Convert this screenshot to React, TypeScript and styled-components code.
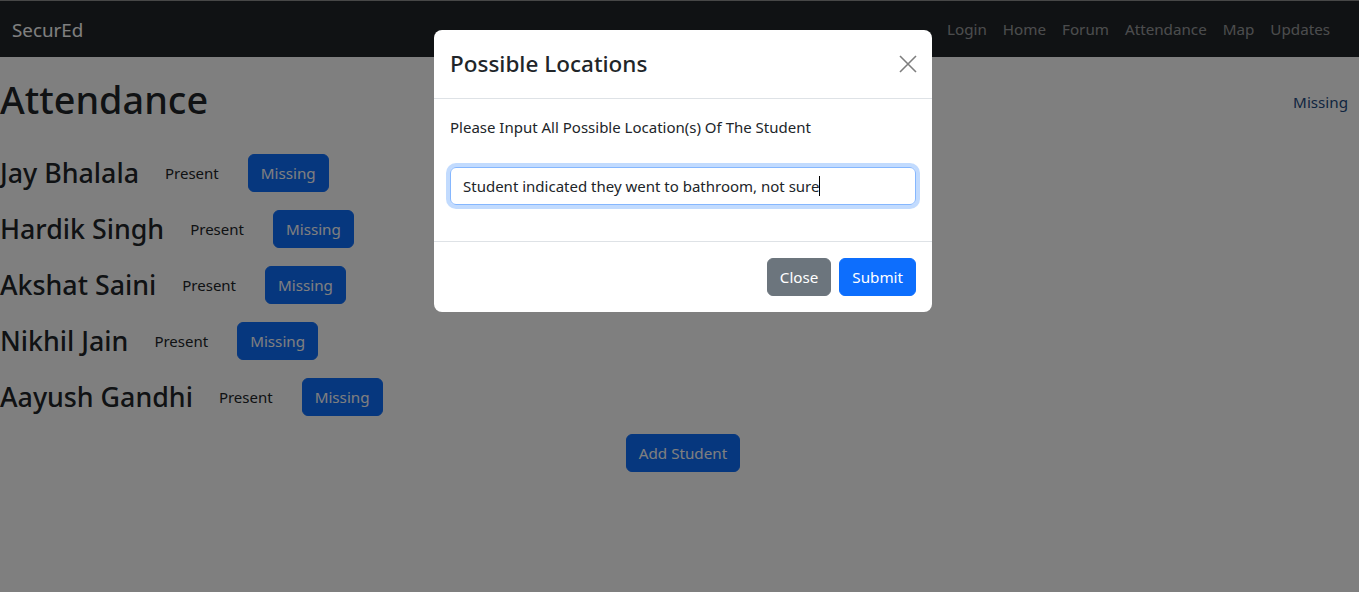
import React from "react";
import styled, { createGlobalStyle } from "styled-components";

const GlobalStyle = createGlobalStyle`
  html, body { margin: 0; padding: 0; }
  body {
    background: #ffffff;
    color: #212529;
    font-family: "Noto Sans", "Open Sans", "DejaVu Sans", sans-serif;
    font-size: 16px;
    line-height: 1.5;
    overflow: hidden;
  }
  * { box-sizing: border-box; }
`;

const Page = styled.div`
  width: 1359px;
  height: 592px;
  position: relative;
  background: #fff;
`;

const Navbar = styled.nav`
  height: 57px;
  border-top: 1px solid #8e8e8e;
  background: #212529;
  display: flex;
  align-items: center;
  justify-content: space-between;
  padding: 0 12px;
`;

const Brand = styled.a`
  color: #ffffff;
  font-size: 18.8px;
  line-height: 30px;
  margin-top: 2px;
  text-decoration: none;
`;

const NavLinks = styled.div`
  display: flex;
  margin-right: 9px;
  margin-top: 0px;
`;

const NavLink = styled.a`
  color: rgba(255, 255, 255, 0.55);
  padding: 8px;
  text-decoration: none;
  font-size: 15.2px;
`;

const Content = styled.main`
  display: flex;
  flex-direction: column;
`;

const HeaderRow = styled.div`
  display: flex;
  align-items: center;
  justify-content: space-between;
  margin-top: 19px;
  padding-right: 11px;
`;

const Title = styled.h1`
  margin: 0;
  font-size: 37.8px;
  font-weight: 500;
  line-height: 48px;
`;

const StatusLink = styled.span`
  color: #1d4a80;
  font-size: 15.2px;
  margin-top: 4px;
`;

const StudentList = styled.div`
  display: flex;
  flex-direction: column;
  gap: 18px;
  margin-top: 30px;
`;

const StudentRow = styled.div`
  display: flex;
  align-items: center;
  height: 38px;
`;

const Name = styled.h3`
  margin: 0;
  font-size: 26.8px;
  font-weight: 500;
  line-height: 34px;
`;

const Present = styled.span`
  margin-left: 26px;
  font-size: 15px;
  color: #212529;
`;

const Button = styled.button<{ $variant?: "primary" | "secondary" }>`
  height: 38px;
  padding: 0 12px;
  border: 1px solid ${(p) => (p.$variant === "secondary" ? "#6c757d" : "#0d6efd")};
  background: ${(p) => (p.$variant === "secondary" ? "#6c757d" : "#0d6efd")};
  color: #fff;
  border-radius: 6px;
  font-family: inherit;
  font-size: 15.2px;
  line-height: 24px;
  cursor: pointer;
`;

const MissingButton = styled(Button)`
  margin-left: 29px;
`;

const AddRow = styled.div`
  display: flex;
  justify-content: center;
  padding-left: 7px;
  margin-top: 18px;
`;

const Backdrop = styled.div`
  position: fixed;
  inset: 0;
  background: rgba(0, 0, 0, 0.5);
`;

const Modal = styled.div`
  position: absolute;
  left: 434px;
  top: 30px;
  width: 498px;
  background: #fff;
  border-radius: 8px;
  display: flex;
  flex-direction: column;
`;

const ModalHeader = styled.div`
  display: flex;
  align-items: center;
  justify-content: space-between;
  padding: 18px 16px 18px 16px;
  border-bottom: 1px solid #dee2e6;
`;

const ModalTitle = styled.h5`
  margin: 0;
  font-size: 22.5px;
  font-weight: 500;
  line-height: 30px;
`;

const CloseX = styled.button`
  width: 32px;
  height: 32px;
  margin-right: -8px;
  border: 0;
  background: transparent;
  padding: 0;
  display: flex;
  align-items: center;
  justify-content: center;
  opacity: 0.5;
  cursor: pointer;
`;

const ModalBody = styled.div`
  padding: 16px 16px 36px 16px;
  border-bottom: 1px solid #dee2e6;
`;

const Prompt = styled.p`
  margin: 0 0 28px 0;
  font-size: 15px;
  line-height: 24px;
`;

const FakeInput = styled.div`
  height: 38px;
  border: 1px solid #86b7fe;
  border-radius: 6px;
  box-shadow: 0 0 0 4px rgba(13, 110, 253, 0.25);
  padding: 0 12px;
  display: flex;
  align-items: center;
  font-size: 15px;
  color: #212529;
`;

const Caret = styled.span`
  display: inline-block;
  width: 1px;
  height: 20px;
  background: #000;
`;

const ModalFooter = styled.div`
  display: flex;
  justify-content: flex-end;
  gap: 8px;
  padding: 16px;
`;

const students = ["Jay Bhalala", "Hardik Singh", "Akshat Saini", "Nikhil Jain", "Aayush Gandhi"];

export default function App() {
  return (
    <Page>
      <GlobalStyle />
      <Navbar>
        <Brand>SecurEd</Brand>
        <NavLinks>
          {["Login", "Home", "Forum", "Attendance", "Map", "Updates"].map((l) => (
            <NavLink key={l}>{l}</NavLink>
          ))}
        </NavLinks>
      </Navbar>
      <Content>
        <HeaderRow>
          <Title>Attendance</Title>
          <StatusLink>Missing</StatusLink>
        </HeaderRow>
        <StudentList>
          {students.map((s) => (
            <StudentRow key={s}>
              <Name>{s}</Name>
              <Present>Present</Present>
              <MissingButton>Missing</MissingButton>
            </StudentRow>
          ))}
        </StudentList>
        <AddRow>
          <Button>Add Student</Button>
        </AddRow>
      </Content>
      <Backdrop />
      <Modal>
        <ModalHeader>
          <ModalTitle>Possible Locations</ModalTitle>
          <CloseX aria-label="Close">
            <svg width="18" height="18" viewBox="0 0 18 18">
              <path d="M1 1 L17 17 M17 1 L1 17" stroke="#000" strokeWidth="1.6" fill="none" />
            </svg>
          </CloseX>
        </ModalHeader>
        <ModalBody>
          <Prompt>Please Input All Possible Location(s) Of The Student</Prompt>
          <FakeInput>
            Student indicated they went to bathroom, not sure
            <Caret />
          </FakeInput>
        </ModalBody>
        <ModalFooter>
          <Button $variant="secondary">Close</Button>
          <Button>Submit</Button>
        </ModalFooter>
      </Modal>
    </Page>
  );
}
